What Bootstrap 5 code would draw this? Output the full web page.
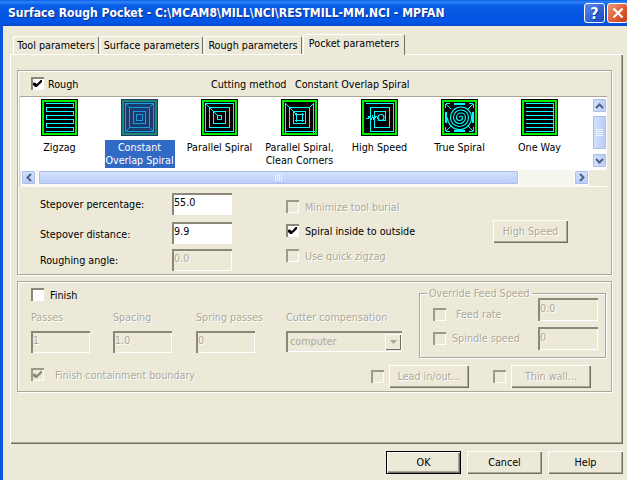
<!DOCTYPE html>
<html lang="en">
<head>
<meta charset="utf-8">
<title>Surface Rough Pocket</title>
<link href="https://cdn.jsdelivr.net/npm/bootstrap@5.3.3/dist/css/bootstrap.min.css" rel="stylesheet">
<style>
:root { --face: #ECE9D8; --shadow: #ACA899; --dark: #716F64; --off: #ACA899; }
html, body { margin: 0; background: var(--face); overflow: hidden; }
body { font-family: "DejaVu Sans Condensed", "DejaVu Sans", "Liberation Sans", sans-serif; font-stretch: condensed; font-size: 10.7px; line-height: 13px; color: #000; }
.win { width: 627px; height: 480px; overflow: hidden; }

/* title bar */
.titlebar { height: 26px; padding-left: 8px; background: linear-gradient(#0A5BE8 0, #2F86F8 2px, #0A5FE8 5px, #0354E0 14px, #0458E8 22px, #0349C8 26px); color: #fff; font-weight: 700; font-size: 12.1px; text-shadow: 1px 1px 0 #0A2F8E; white-space: nowrap; }
.capbtn { width: 21px; height: 20px; border: 1px solid #fff; border-radius: 3px; color: #fff; flex: none; font-size: 16px; }
.capbtn.help { margin-left: auto; margin-right: 2px; background: linear-gradient(135deg, #5D8BEF, #2A58D0 70%, #1C45B8); }
.capbtn.close { margin-right: -1px; background: linear-gradient(135deg, #EE9A7C, #DC5A30 60%, #C03A14); }

.client { height: 454px; border-left: 3px solid #0855DD; padding-top: 8px; }

/* tabs */
.xp-tabs { margin-left: 10px; height: 20px; border: 0; flex-wrap: nowrap; position: relative; z-index: 1; }
.xp-tabs .nav-link { height: 18px; margin: 2px 1px 0 0; padding: 0; border: 0; border-radius: 2px 2px 0 0; background: var(--face); color: #000; font-size: 10.7px; line-height: 19px; text-align: center; box-shadow: inset 1px 1px 0 #fff, inset -1px 0 0 var(--dark); }
.xp-tabs .nav-link.active { height: 21px; margin-top: 0; line-height: 20px; background: var(--face); color: #000; }
.xp-tabs li:nth-child(1) .nav-link { width: 86px; }
.xp-tabs li:nth-child(2) .nav-link { width: 103px; }
.xp-tabs li:nth-child(3) .nav-link { width: 98px; }
.xp-tabs li:nth-child(4) .nav-link { width: 102px; }

.panel { width: 613px; height: 390px; margin-left: 7px; padding: 16px 0 0 7px; box-shadow: inset 1px 1px 0 #fff, inset -1px -1px 0 var(--dark), inset -2px -2px 0 var(--shadow); }

.group { width: 595px; border: 1px solid var(--shadow); box-shadow: inset 1px 1px 0 #fff, 1px 1px 0 #fff; }
.group.rough { height: 205px; }
.group.finish { height: 111px; margin-top: 6px; }

/* header row */
.rough-head { height: 25px; padding-left: 13px; }
.rough-head label, .rough-head span { padding-top: 1px; }
.rough-name { width: 163px; }
.cut-label { width: 84px; }

/* thumbnails list */
.lv { width: 588px; height: 91px; margin-left: 1px; background: #fff; border-top: 1px solid var(--shadow); border-left: 1px solid #D6D3C4; }
.lv-items { height: 73px; }
.lv-list { width: 572px; }
.lv-item { width: 80px; padding: 2px 1px 0 0; text-align: center; }
.lv-item svg { display: block; margin: 0 0 0 21px; }
.lv-item span { display: inline-block; margin-top: 4px; padding: 1px 0; }
.lv-item.sel span { width: 70px; height: 28px; background: #316AC5; color: #fff; white-space: nowrap; }
.ico { shape-rendering: crispEdges; }
.ico .bg { fill: #000; }
.ico .ring { fill: none; stroke: #00F000; stroke-width: 2; }
.ico .ln { fill: none; stroke: #0FF; stroke-width: 1; }
.ico .curve { fill: none; stroke: #0FF; stroke-width: 1.2; shape-rendering: auto; }
.sel .ico .bg { fill: #1A3B6E; }
.sel .ico .ring { stroke: #1C8A70; }
.sel .ico .ln { stroke: #1E9BDC; }

/* scrollbars */
.sb-btn, .sb-thumb { background: linear-gradient(90deg, #D6E2FC, #B9CCF7); border: 1px solid #fff; border-radius: 2px; box-shadow: 0 0 0 1px #A9BFEA inset; color: #4D6185; }
.vbar { width: 15px; padding-top: 1px; }
.vbar .sb-btn { width: 15px; height: 15px; }
.vbar .sb-thumb { width: 15px; height: 35px; margin: 2px 0 3px; }
.hbar { height: 16px; background: var(--face); padding-left: 1px; }
.hbar-track { width: 568px; height: 16px; background: #F7F6EE; }
.hbar .sb-btn { width: 15px; height: 15px; flex: none; background: linear-gradient(#D6E2FC, #B9CCF7); }
.hbar .sb-thumb { width: 481px; height: 15px; margin: 0 55px 0 2px; background: linear-gradient(#D6E2FC, #B9CCF7); }

/* form controls */
.xp-check { appearance: none; width: 13px; height: 13px; margin: 0; flex: none; background: #fff; border: 0; box-shadow: inset 2px 2px 0 #8B887B, inset -1px -1px 0 #fff; position: relative; display: block; }
.xp-check:disabled { background: var(--face); box-shadow: inset 2px 2px 0 #9D9A8C, inset -1px -1px 0 #fff; }
.xp-check:checked::after { content: ""; position: absolute; left: 2px; top: 3px; width: 9px; height: 7px; background: #000; clip-path: polygon(0 40%, 30% 40%, 40% 62%, 85% 0, 100% 0, 100% 30%, 42% 100%, 25% 100%, 0 70%); }
.xp-check:disabled:checked::after { background: #8B887B; }
.xp-field { height: 22px; padding: 0 1px 3px 2px; background: #fff; border: 0; border-radius: 0; box-shadow: inset 2px 2px 0 #8B887B, inset -1px -1px 0 #fff; font: inherit; color: #000; outline: 0; display: block; }
.xp-field:disabled, .xp-field.off { background: var(--face); color: var(--off); text-shadow: 1px 1px 0 #fff; }
.w60 { width: 60px; }
.off { color: var(--off); text-shadow: 1px 1px 0 #fff; }
.xp-btn { height: 23px; padding: 0; background: var(--face); border: 0; border-radius: 0; font-size: 10.7px; line-height: 13px; color: #000; box-shadow: inset 1px 1px 0 #fff, inset -1px -1px 0 var(--dark), inset -2px -2px 0 var(--shadow); }
.xp-btn:disabled { background: var(--face); color: var(--off); opacity: 1; text-shadow: 1px 1px 0 #fff; }
.xp-btn.w75 { width: 75px; }
.xp-btn.w80 { width: 80px; }
.xp-btn.default { outline: 1px solid #000; outline-offset: -1px; box-shadow: inset 2px 2px 0 #fff, inset -2px -2px 0 var(--dark), inset -3px -3px 0 var(--shadow); }

/* rough form area */
.col-left { width: 268px; padding: 6px 0 0 22px; }
.col-left .line { height: 22px; margin-bottom: 7px; }
.col-left .line:nth-child(2) { margin-bottom: 5px; }
.col-left label { width: 132px; }
.col-left .line:nth-child(2) label { padding-top: 3px; }
.col-mid { width: 207px; padding-top: 13px; }
.col-mid .line { height: 13px; margin-bottom: 11px; gap: 6px; }
.col-mid .line span { padding-top: 2px; }
.col-mid .line:nth-child(2) { margin-bottom: 12px; }
.col-right { padding-top: 33px; }

/* finish area */
.finish-left { width: 401px; padding: 6px 0 0 13px; }
.finish-name { height: 13px; gap: 6px; }
.finish-name span { padding-top: 2px; }
.finish-grid { display: grid; grid-template-columns: 82px 83px 90px 116px; row-gap: 7px; margin-top: 10px; }
.finish-grid .w60 { width: 59px; }
.combo { width: 116px; height: 21px; padding: 2px 1px 2px 4px; box-shadow: inset 2px 2px 0 #8B887B, inset -1px -1px 0 #fff; color: var(--off); }
.combo-arrow { width: 16px; height: 16px; margin-left: auto; box-shadow: inset 1px 1px 0 #fff, inset -1px -1px 0 var(--dark); }
.feed { position: relative; width: 187px; height: 65px; margin-top: 11px; padding: 4px 7px 0 13px; border: 1px solid var(--shadow); box-shadow: inset 1px 1px 0 #fff, 1px 1px 0 #fff; }
.feed-title { position: absolute; top: -7px; left: 7px; padding: 0 2px; background: var(--face); }
.feed-row { height: 23px; margin-bottom: 6px; }
.feed-row .xp-field { margin-left: auto; height: 23px; }
.nudge { margin-top: 10px; }
.gap-10 { margin-left: 10px; }
.gap-6 { margin-left: 6px; }
.finish-foot { margin-top: 7px; padding-left: 13px; }
.finish-foot .contain { width: 340px; gap: 6px; margin-top: 2px; align-self: flex-start; }
.finish-foot .contain span { padding-top: 2px; }
.finish-foot .xp-check { margin-right: 5px; }
.finish-foot .spacer { margin-left: 24px; }

.dlg-btns { width: 613px; margin: 7px 0 0 7px; gap: 6px; }
</style>
</head>
<body>
<div class="win">
  <div class="titlebar d-flex align-items-center">
    <span>Surface Rough Pocket - C:\MCAM8\MILL\NCI\RESTMILL-MM.NCI - MPFAN</span>
    <span class="capbtn help d-flex align-items-center justify-content-center">?</span>
    <span class="capbtn close d-flex align-items-center justify-content-center">
      <svg width="12" height="12" viewBox="0 0 12 12"><path d="M1.5 1.5L10.5 10.5M10.5 1.5L1.5 10.5" stroke="#fff" stroke-width="2.2"/></svg>
    </span>
  </div>

  <div class="client">
    <ul class="nav nav-tabs xp-tabs">
      <li class="nav-item"><a class="nav-link" href="#">Tool parameters</a></li>
      <li class="nav-item"><a class="nav-link" href="#">Surface parameters</a></li>
      <li class="nav-item"><a class="nav-link" href="#">Rough parameters</a></li>
      <li class="nav-item"><a class="nav-link active" href="#">Pocket parameters</a></li>
    </ul>

    <div class="panel">
      <!-- Rough -->
      <div class="group rough">
        <div class="rough-head d-flex align-items-center">
          <input type="checkbox" class="xp-check me-1" checked>
          <label class="rough-name">Rough</label>
          <span class="cut-label">Cutting method</span>
          <span>Constant Overlap Spiral</span>
        </div>

        <div class="lv">
          <div class="lv-items d-flex">
            <div class="lv-list d-flex">
              <div class="lv-item">
                <svg class="ico" width="37" height="37" viewBox="0 0 37 37"><rect class="bg" width="37" height="37"/><rect class="ring" x="2" y="2" width="33" height="33"/><path class="ln" d="M5 4.5H32.5V8.5H5V12.5H32.5V16.5H5V20.5H32.5V24.5H5V28.5H32.5V32.5H5"/></svg>
                <span>Zigzag</span>
              </div>
              <div class="lv-item sel">
                <svg class="ico" width="37" height="37" viewBox="0 0 37 37"><rect class="bg" width="37" height="37"/><rect class="ring" x="2" y="2" width="33" height="33"/><path class="ln" d="M4.5 4.5H32.5V32.5H4.5ZM8.5 8.5H28.5V28.5H8.5ZM12.5 12.5H24.5V24.5H12.5ZM15.5 15.5H21.5V21.5H15.5ZM4.5 4.5L8.5 8.5M32.5 4.5L28.5 8.5M4.5 32.5L8.5 28.5M32.5 32.5L28.5 28.5"/></svg>
                <span>Constant<br>Overlap Spiral</span>
              </div>
              <div class="lv-item">
                <svg class="ico" width="37" height="37" viewBox="0 0 37 37"><rect class="bg" width="37" height="37"/><rect class="ring" x="2" y="2" width="33" height="33"/><path class="ln" d="M4.5 4.5H32.5V32.5H4.5ZM8.5 8.5H28.5V28.5H8.5ZM12.5 12.5H24.5V24.5H12.5ZM16.5 16.5H20.5V20.5H16.5ZM4.5 4.5L16.5 16.5"/></svg>
                <span>Parallel Spiral</span>
              </div>
              <div class="lv-item">
                <svg class="ico" width="37" height="37" viewBox="0 0 37 37"><rect class="bg" width="37" height="37"/><rect class="ring" x="2" y="2" width="33" height="33"/><path class="ln" d="M4.5 3.5V33.5M3.5 32.5H33.5M32.5 3.5V33.5M8.5 8.5V28.5H28.5V8.5H8.5M12.5 12.5H24.5V24.5H12.5ZM15.5 14V23M21.5 14V23M14 15.5H23M14 21.5H23M4.5 4.5L15.5 15.5M32.5 4.5L28.5 8.5"/></svg>
                <span>Parallel Spiral, Clean Corners</span>
              </div>
              <div class="lv-item">
                <svg class="ico" width="37" height="37" viewBox="0 0 37 37"><rect class="bg" width="37" height="37"/><rect class="ring" x="2" y="2" width="33" height="33"/><path class="ln" d="M4.5 4.5H32.5V32.5H9.5V8.5H28.5V28.5H13.5V12.5H24.5V21.5H17M4.5 19.5H7L8 17.5L10 21L11.5 17.5L13 20.5L15 17L17 19.5"/><circle class="curve" cx="20" cy="18.5" r="3"/></svg>
                <span>High Speed</span>
              </div>
              <div class="lv-item">
                <svg class="ico" width="37" height="37" viewBox="0 0 37 37"><rect class="bg" width="37" height="37"/><rect class="ring" x="2" y="2" width="33" height="33"/><path class="curve" d="M18.5 18.5A1.5 1.5 0 0 1 21.5 18.5A3 3 0 0 1 15.5 18.5A4.5 4.5 0 0 1 24.5 18.5A6 6 0 0 1 12.5 18.5A7.5 7.5 0 0 1 27.5 18.5A9 9 0 0 1 9.5 18.5A10.5 10.5 0 0 1 30.5 18.5A12 12 0 0 1 6.5 18.5"/><path class="ln" d="M13 4.5H24M13 5.5H24M13 31.5H24M13 32.5H24M4.5 13V24M5.5 13V24M31.5 13V24M32.5 13V24M5 5L10 10M32 5L27 10M5 32L10 27M32 32L27 27M5 4.5H9M28 4.5H32M5 32.5H9M28 32.5H32M4.5 5V9M32.5 5V9M4.5 28V32M32.5 28V32"/></svg>
                <span>True Spiral</span>
              </div>
              <div class="lv-item">
                <svg class="ico" width="37" height="37" viewBox="0 0 37 37"><rect class="bg" width="37" height="37"/><rect class="ring" x="2" y="2" width="33" height="33"/><path class="ln" d="M4.5 4.5H32.5V32.5H4.5M4.5 8.5H32.5M4.5 12.5H32.5M4.5 16.5H32.5M4.5 20.5H32.5M4.5 24.5H32.5M4.5 28.5H32.5"/></svg>
                <span>One Way</span>
              </div>
            </div>
            <div class="vbar">
              <div class="sb-btn d-flex align-items-center justify-content-center"><svg width="9" height="6" viewBox="0 0 9 6"><path d="M1 5L4.5 1.5L8 5" fill="none" stroke="#4D6185" stroke-width="2"/></svg></div>
              <div class="sb-thumb d-flex align-items-center justify-content-center"><svg width="7" height="7" viewBox="0 0 7 7"><path d="M0 .5H7M0 2.5H7M0 4.5H7M0 6.5H7" stroke="#EEF3FE"/></svg></div>
              <div class="sb-btn d-flex align-items-center justify-content-center"><svg width="9" height="6" viewBox="0 0 9 6"><path d="M1 1L4.5 4.5L8 1" fill="none" stroke="#4D6185" stroke-width="2"/></svg></div>
            </div>
          </div>
          <div class="hbar">
            <div class="hbar-track d-flex">
              <div class="sb-btn d-flex align-items-center justify-content-center"><svg width="6" height="9" viewBox="0 0 6 9"><path d="M5 1L1.5 4.5L5 8" fill="none" stroke="#4D6185" stroke-width="2"/></svg></div>
              <div class="sb-thumb d-flex align-items-center justify-content-center"><svg width="7" height="7" viewBox="0 0 7 7"><path d="M.5 0V7M2.5 0V7M4.5 0V7M6.5 0V7" stroke="#EEF3FE"/></svg></div>
              <div class="sb-btn d-flex align-items-center justify-content-center"><svg width="6" height="9" viewBox="0 0 6 9"><path d="M1 1L4.5 4.5L1 8" fill="none" stroke="#4D6185" stroke-width="2"/></svg></div>
            </div>
          </div>
        </div>

        <div class="d-flex">
          <div class="col-left">
            <div class="line d-flex align-items-center"><label>Stepover percentage:</label><input class="xp-field w60" value="55.0"></div>
            <div class="line d-flex align-items-center"><label>Stepover distance:</label><input class="xp-field w60" value="9.9"></div>
            <div class="line d-flex align-items-center"><label>Roughing angle:</label><input class="xp-field w60" value="0.0" disabled></div>
          </div>
          <div class="col-mid">
            <div class="line d-flex align-items-center"><input type="checkbox" class="xp-check" disabled><span class="off">Minimize tool burial</span></div>
            <div class="line d-flex align-items-center"><input type="checkbox" class="xp-check" checked><span>Spiral inside to outside</span></div>
            <div class="line d-flex align-items-center"><input type="checkbox" class="xp-check" disabled><span class="off">Use quick zigzag</span></div>
          </div>
          <div class="col-right">
            <button class="btn xp-btn w75" disabled>High Speed</button>
          </div>
        </div>
      </div>

      <!-- Finish -->
      <div class="group finish">
        <div class="d-flex">
          <div class="finish-left">
            <div class="finish-name d-flex align-items-center"><input type="checkbox" class="xp-check"><span>Finish</span></div>
            <div class="finish-grid">
              <span class="off">Passes</span>
              <span class="off">Spacing</span>
              <span class="off">Spring passes</span>
              <span class="off">Cutter compensation</span>
              <input class="xp-field w60" value="1" disabled>
              <input class="xp-field w60" value="1.0" disabled>
              <input class="xp-field w60" value="0" disabled>
              <div class="combo d-flex align-items-center">
                <span>computer</span>
                <span class="combo-arrow d-flex align-items-center justify-content-center"><svg width="7" height="4" viewBox="0 0 7 4"><path d="M0 0H7L3.5 4Z" fill="#ACA899"/></svg></span>
              </div>
            </div>
          </div>
          <div class="feed">
            <span class="feed-title off">Override Feed Speed</span>
            <div class="feed-row d-flex align-items-center">
              <input type="checkbox" class="xp-check nudge" disabled><span class="off nudge gap-10">Feed rate</span>
              <input class="xp-field w60" value="0.0" disabled>
            </div>
            <div class="feed-row d-flex align-items-center">
              <input type="checkbox" class="xp-check" disabled><span class="off gap-6">Spindle speed</span>
              <input class="xp-field w60" value="0" disabled>
            </div>
          </div>
        </div>
        <div class="finish-foot d-flex align-items-center">
          <div class="contain d-flex align-items-center"><input type="checkbox" class="xp-check" checked disabled><span class="off">Finish containment boundary</span></div>
          <input type="checkbox" class="xp-check" disabled>
          <button class="btn xp-btn w80" disabled>Lead in/out...</button>
          <input type="checkbox" class="xp-check spacer" disabled>
          <button class="btn xp-btn w80" disabled>Thin wall...</button>
        </div>
      </div>
    </div>

    <div class="dlg-btns d-flex justify-content-end">
      <button class="btn xp-btn w75 default">OK</button>
      <button class="btn xp-btn w75">Cancel</button>
      <button class="btn xp-btn w75">Help</button>
    </div>
  </div>
</div>
</body>
</html>
